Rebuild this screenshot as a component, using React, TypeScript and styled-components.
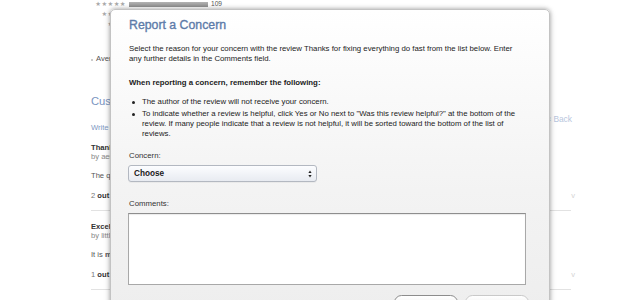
import React from "react";
import styled, { createGlobalStyle } from "styled-components";

const GlobalStyle = createGlobalStyle`
  html, body { margin: 0; padding: 0; background: #fff; }
  body { font-family: "Liberation Sans", Arial, Helvetica, sans-serif; }
  * { box-sizing: border-box; }
`;

const Page = styled.div`
  position: relative;
  width: 640px;
  height: 300px;
  overflow: hidden;
  background: #fff;
`;

/* ---------- background page ---------- */

const Column = styled.div`
  width: 480px;
  margin-left: 91px;
  display: flex;
  flex-direction: column;
  font-size: 7.6px;
  line-height: 9px;
  color: #444;
`;

const Ratings = styled.div`
  display: grid;
  grid-template-columns: 35px 79px auto;
  column-gap: 3px;
  align-items: center;
  margin-top: -1px;
`;

const Stars = styled.div`
  font-family: "DejaVu Sans", sans-serif;
  font-size: 6.4px;
  line-height: 10px;
  letter-spacing: 0.4px;
  color: #a9a9a9;
  text-align: right;
  white-space: nowrap;
`;

const BarTrack = styled.div`
  height: 5px;
`;

const BarFill = styled.div`
  height: 5px;
  background: linear-gradient(#b3b3b3, #8f8f8f);
`;

const Count = styled.div`
  font-size: 6.6px;
  line-height: 10px;
  color: #555;
`;

const AverageRow = styled.div`
  display: flex;
  align-items: center;
  gap: 3px;
  margin-top: 5px;
  color: #555;
`;

const TinyDot = styled.span`
  width: 2px;
  height: 2px;
  border-radius: 50%;
  background: #bbb;
  margin-top: 3px;
`;

const HeaderBlock = styled.div`
  display: grid;
  grid-template-columns: 1fr auto;
  margin-top: 31px;
`;

const SectionTitle = styled.div`
  font-size: 11.2px;
  line-height: 14px;
  color: #7b95bf;
`;

const WriteLink = styled.div`
  margin-top: 15px;
  color: #7e98c2;
`;

const BackLink = styled.div`
  padding-top: 21px;
  margin-right: -1px;
  font-size: 8.4px;
  color: #b8c6dd;
`;

const Review = styled.div`
  display: flex;
  flex-direction: column;
  padding: 11px 0 10px;
  border-bottom: 1px solid #e2e2e2;
  &:first-of-type {
    margin-top: 2px;
  }
`;

const ReviewTitle = styled.div`
  font-weight: bold;
  color: #333;
`;

const ReviewBy = styled.div`
  color: #888;
`;

const ReviewBody = styled.div`
  margin-top: 10px;
  color: #555555;
`;

const HelpfulRow = styled.div`
  margin-top: 11px;
  display: flex;
  justify-content: space-between;
  color: #333;
`;

const Muted = styled.span`
  color: #777;
`;

const Faint = styled.span`
  color: #d4d4d4;
  margin-right: -4px;
`;

/* ---------- dialog ---------- */

const Dialog = styled.div`
  position: absolute;
  left: 110px;
  top: 9px;
  width: 440px;
  height: 330px;
  border: 1px solid #c3c3c3;
  border-radius: 5px;
  background: linear-gradient(
    to bottom,
    #ffffff 0px,
    #fbfbfb 60px,
    #f3f3f3 180px,
    #eeeeee 300px
  );
  box-shadow: 0 0 4px rgba(0, 0, 0, 0.3), 0 1px 7px rgba(0, 0, 0, 0.15);
  padding: 8px 23px 0 18px;
  display: flex;
  flex-direction: column;
  color: #222;
  font-size: 7.8px;
  line-height: 10px;
`;

const Title = styled.h2`
  margin: 0;
  font-size: 12.3px;
  line-height: 15px;
  font-weight: normal;
  color: #5d7ba9;
  -webkit-text-stroke: 0.35px #5d7ba9;
`;

const Intro = styled.p`
  margin: 11px 0 0;
`;

const Heading = styled.p`
  margin: 14px 0 0;
  font-weight: bold;
`;

const List = styled.ul`
  margin: 9px 0 0;
  padding: 0;
  list-style: none;
  display: flex;
  flex-direction: column;
  gap: 2px;
`;

const Item = styled.li`
  display: flex;
  align-items: flex-start;
  gap: 7px;
  padding-left: 3px;
`;

const Bullet = styled.span`
  flex: none;
  width: 3px;
  height: 3px;
  border-radius: 50%;
  background: #222;
  margin-top: 4px;
`;

const Label = styled.div<{ $gap: number }>`
  margin-top: ${(p) => p.$gap}px;
  color: #333;
`;

const SelectBox = styled.div`
  margin: 4px 0 0 -1px;
  width: 189px;
  height: 17px;
  border: 1px solid #b3b8c1;
  border-radius: 3px;
  background: linear-gradient(#fcfdff, #e8ebf1);
  box-shadow: 0 1px 0 rgba(0, 0, 0, 0.04);
  display: flex;
  align-items: center;
  justify-content: space-between;
  padding: 0 4px 0 5px;
  font-size: 8.2px;
  font-weight: bold;
  color: #1b1b1b;
`;

const TextArea = styled.textarea`
  display: block;
  margin: 4px 0 0 -1px;
  width: 398px;
  height: 72px;
  border: 1px solid #a8a8a8;
  border-top-color: #8e8e8e;
  background: #fff;
  box-shadow: inset 0 1px 1px rgba(0, 0, 0, 0.08);
  resize: none;
  outline: none;
  padding: 2px;
  font-family: inherit;
  font-size: 8px;
`;

const ButtonRow = styled.div`
  margin: 10px -3px 0 0;
  display: flex;
  justify-content: flex-end;
  gap: 7px;
`;

const Button = styled.button<{ $disabled?: boolean }>`
  width: 64px;
  height: 15px;
  border-radius: 8px;
  border: 1px solid ${(p) => (p.$disabled ? "#c9c9c9" : "#8c8c8c")};
  background: linear-gradient(#ffffff, #ececec);
  font-family: inherit;
  font-size: 8px;
  line-height: 10px;
  font-weight: bold;
  color: ${(p) => (p.$disabled ? "#bdbdbd" : "#111")};
  padding: 0;
`;

const Arrows = () => (
  <svg width="4" height="8" viewBox="0 0 4 8" aria-hidden="true">
    <path d="M2 0.5 L3.6 2.9 H0.4 Z" fill="#222" />
    <path d="M2 7.5 L3.6 5.1 H0.4 Z" fill="#222" />
  </svg>
);

const ratingRows = [
  { stars: "★★★★★", pct: 100, n: "109" },
  { stars: "★★★★", pct: 18, n: "19" },
  { stars: "★★★", pct: 6, n: "6" },
  { stars: "★★", pct: 3, n: "3" },
  { stars: "★", pct: 4, n: "4" },
];

export default function App() {
  return (
    <>
      <GlobalStyle />
      <Page>
        <Column>
          <Ratings>
            {ratingRows.map((r) => (
              <React.Fragment key={r.stars}>
                <Stars>{r.stars}</Stars>
                <BarTrack>
                  <BarFill style={{ width: `${r.pct}%` }} />
                </BarTrack>
                <Count>{r.n}</Count>
              </React.Fragment>
            ))}
          </Ratings>
          <AverageRow>
            <TinyDot />
            <span>Average rating: 4.5</span>
          </AverageRow>
          <HeaderBlock>
            <div>
              <SectionTitle>Customer Reviews</SectionTitle>
              <WriteLink>Write a Review</WriteLink>
            </div>
            <BackLink>« Back</BackLink>
          </HeaderBlock>
          <Review>
            <ReviewTitle>Thanks for fixing everything do fast</ReviewTitle>
            <ReviewBy>by aerodude</ReviewBy>
            <ReviewBody>The quick update fixed the problem right away.</ReviewBody>
            <HelpfulRow>
              <span>
                <Muted>2</Muted> <b>out of 2 customers found this review helpful</b>
              </span>
              <Faint>v</Faint>
            </HelpfulRow>
          </Review>
          <Review>
            <ReviewTitle>Excellent app</ReviewTitle>
            <ReviewBy>by littlebird</ReviewBy>
            <ReviewBody>
              It is <b>my</b> favourite app so far.
            </ReviewBody>
            <HelpfulRow>
              <span>
                <Muted>1</Muted> <b>out of 1 customers found this review helpful</b>
              </span>
              <Faint>v</Faint>
            </HelpfulRow>
          </Review>
        </Column>

        <Dialog role="dialog" aria-label="Report a Concern">
          <Title>Report a Concern</Title>
          <Intro>
            Select the reason for your concern with the review Thanks for fixing everything do
            fast from the list below. Enter any further details in the Comments field.
          </Intro>
          <Heading>When reporting a concern, remember the following:</Heading>
          <List>
            <Item>
              <Bullet />
              <span>The author of the review will not receive your concern.</span>
            </Item>
            <Item>
              <Bullet />
              <span>
                To indicate whether a review is helpful, click Yes or No next to "Was this review
                helpful?" at the bottom of the review. If many people indicate that a review is not
                helpful, it will be sorted toward the bottom of the list of reviews.
              </span>
            </Item>
          </List>
          <Label $gap={12}>Concern:</Label>
          <SelectBox>
            <span>Choose</span>
            <Arrows />
          </SelectBox>
          <Label $gap={17}>Comments:</Label>
          <TextArea aria-label="Comments" />
          <ButtonRow>
            <Button>Cancel</Button>
            <Button $disabled disabled>
              Submit
            </Button>
          </ButtonRow>
        </Dialog>
      </Page>
    </>
  );
}
